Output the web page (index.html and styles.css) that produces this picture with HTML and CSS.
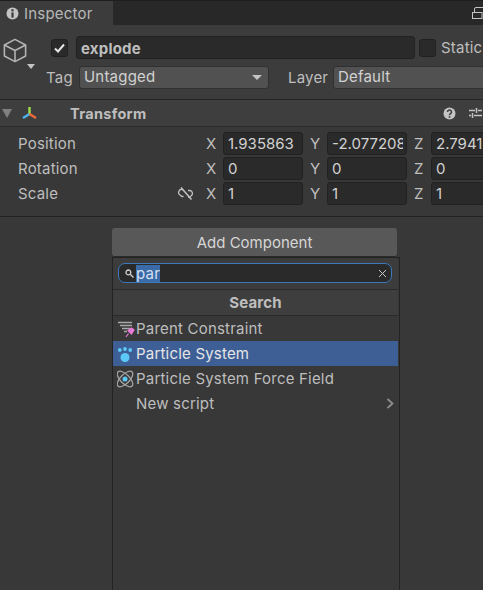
FILE: index.html
```html
<!DOCTYPE html>
<html lang="en">
<head>
    <meta charset="UTF-8">
    <meta name="viewport" content="width=device-width, initial-scale=1.0">
    <title>Inspector</title>
    <link rel="stylesheet" href="styles.css">
</head>
<body>
    <div class="tab-bar">
        <div class="tab">
            <svg class="tab-icon" width="13" height="13" viewBox="0 0 13 13"><circle cx="6.5" cy="6.5" r="6" fill="#c4c4c4"/><rect x="5.4" y="2.2" width="2.2" height="2.2" fill="#3c3c3c"/><rect x="5.4" y="5.4" width="2.2" height="5.2" fill="#3c3c3c"/></svg>
            <span>Inspector</span>
        </div>
        <svg class="lock" width="11" height="12" viewBox="0 0 11 12" fill="none" stroke="#c4c4c4" stroke-width="1"><rect x="0.5" y="5.5" width="9.5" height="6"/><path d="M2.5 5.5V2a1.5 1.5 0 0 1 1.5-1.5H11"/></svg>
    </div>

    <div class="object-header">
        <div class="cube-wrap">
            <svg width="24" height="25" viewBox="0 0 26 27" fill="none" stroke="#b4b4b4" stroke-width="1.7" stroke-linejoin="round"><path d="M13 1.5 24.5 7.5V19.5L13 25.5 1.5 19.5V7.5Z"/><path d="M1.5 7.5 13 13.5 24.5 7.5M13 13.5V25.5"/></svg>
            <span class="cube-arrow"></span>
        </div>
        <div class="header-rows">
            <div class="name-row">
                <span class="checkbox">
                    <svg width="11" height="10" viewBox="0 0 11 10" fill="none" stroke="#e6e6e6" stroke-width="2"><path d="M1 5.5 4 8.5 10 1.5"/></svg>
                </span>
                <div class="name-field">explode</div>
                <span class="checkbox static-box"></span>
                <span class="static-label">Static</span>
            </div>
            <div class="tag-row">
                <span class="tag-label">Tag</span>
                <div class="dropdown tag-drop">Untagged<span class="drop-arrow"></span></div>
                <span class="layer-label">Layer</span>
                <div class="dropdown layer-drop">Default</div>
            </div>
        </div>
    </div>

    <div class="component-head">
        <span class="fold-arrow"></span>
        <svg class="transform-icon" width="17" height="15" viewBox="0 0 17 15" fill="none" stroke-width="2.4">
            <path d="M8.5 8V1" stroke="#9ee04a"/>
            <path d="M8.5 8 2 12" stroke="#4fb4ee"/>
            <path d="M8.5 8 15 12" stroke="#ee6a3c"/>
        </svg>
        <span class="component-title">Transform</span>
        <svg class="help" width="13" height="13" viewBox="0 0 13 13"><circle cx="6.5" cy="6.5" r="6" fill="#c4c4c4"/><path d="M4.5 5a2 2 0 1 1 3 1.7c-.7.4-1 .8-1 1.5" fill="none" stroke="#3e3e3e" stroke-width="1.5"/><rect x="5.7" y="9.2" width="1.6" height="1.6" fill="#3e3e3e"/></svg>
        <svg class="sliders" width="13" height="12" viewBox="0 0 13 12" fill="none" stroke="#c4c4c4" stroke-width="1.5"><path d="M0 3.5H6M9 3.5H13M7.5 1V6M0 8.5H2M5 8.5H13M3.5 6V11"/></svg>
    </div>

    <div class="transform-body">
        <div class="vec-row">
            <span class="vec-label">Position</span>
            <span class="axis">X</span><div class="num-field"><span class="num-value">1.935863</span></div>
            <span class="axis">Y</span><div class="num-field"><span class="num-value">-2.077208</span></div>
            <span class="axis">Z</span><div class="num-field"><span class="num-value">2.794138</span></div>
        </div>
        <div class="vec-row">
            <span class="vec-label">Rotation</span>
            <span class="axis">X</span><div class="num-field"><span class="num-value">0</span></div>
            <span class="axis">Y</span><div class="num-field"><span class="num-value">0</span></div>
            <span class="axis">Z</span><div class="num-field"><span class="num-value">0</span></div>
        </div>
        <div class="vec-row">
            <span class="vec-label">Scale
                <svg class="link-icon" width="16" height="13" viewBox="0 0 16 13" fill="none" stroke="#c4c4c4" stroke-width="1.3"><path d="M5 2.5H4a3 3 0 0 0-2 5.500l2 1.500h1.500M10 3.500H12a3 3 0 0 1 1 5.500l-2 1h-1"/><path d="M3 .5 13.500 12.500" stroke-width="1.5"/></svg>
            </span>
            <span class="axis">X</span><div class="num-field"><span class="num-value">1</span></div>
            <span class="axis">Y</span><div class="num-field"><span class="num-value">1</span></div>
            <span class="axis">Z</span><div class="num-field"><span class="num-value">1</span></div>
        </div>
    </div>

    <div class="add-area">
        <button class="add-button">Add Component</button>
        <div class="popup">
            <div class="search-row">
                <div class="search-box">
                    <svg width="9" height="9" viewBox="0 0 9 9" fill="none" stroke="#d0d0d0" stroke-width="1.3"><circle cx="3.4" cy="3.4" r="2.4"/><path d="M5.2 5.2 8.5 8.5"/></svg>
                    <span class="search-text">par</span>
                    <svg class="search-clear" width="9" height="9" viewBox="0 0 9 9" fill="none" stroke="#c8c8c8" stroke-width="1"><path d="M1 1 8 8M8 1 1 8"/></svg>
                </div>
            </div>
            <div class="popup-title">Search</div>
            <div class="result">
                <svg class="result-icon" width="18" height="18" viewBox="0 0 18 18" fill="none">
                    <path d="M1 2.5H15M3 5.5H15M5 8.5H13M7 11.5H10" stroke="#a8a8a8" stroke-width="1.5"/>
                    <path d="M11 10.500 14.500 14 17 10 14.500 8ZM11.500 13.500 9 17" stroke="#e87ad8" fill="#e87ad8" stroke-width="1.2"/>
                </svg>
                <span>Parent Constraint</span>
            </div>
            <div class="result selected">
                <svg class="result-icon" width="18" height="18" viewBox="0 0 18 18" fill="#5cc8f8">
                    <circle cx="8" cy="12.5" r="4.5"/>
                    <circle cx="2.8" cy="5" r="1.9"/>
                    <circle cx="8" cy="4" r="1.9"/>
                    <circle cx="13.2" cy="5" r="1.9"/>
                </svg>
                <span>Particle System</span>
            </div>
            <div class="result">
                <svg class="result-icon" width="18" height="18" viewBox="0 0 18 18" fill="none" stroke="#a4a4a4" stroke-width="1.3">
                    <ellipse cx="8" cy="9" rx="10" ry="4.5" transform="rotate(45 8 9)"/>
                    <ellipse cx="8" cy="9" rx="10" ry="4.5" transform="rotate(-45 8 9)"/>
                    <circle cx="8" cy="9" r="2.5" fill="#5cc8f8" stroke="none"/>
                </svg>
                <span>Particle System Force Field</span>
            </div>
            <div class="result">
                <span class="result-spacer"></span>
                <span>New script</span>
                <svg class="result-more" width="8" height="11" viewBox="0 0 8 11" fill="none" stroke="#8c8c8c" stroke-width="1.8"><path d="M1.5 1 6.5 5.5 1.5 10"/></svg>
            </div>
        </div>
    </div>
</body>
</html>
```

FILE: styles.css
```css
html, body {
    height: 100%;
}
body {
    margin: 0;
    width: 483px;
    height: 590px;
    overflow: hidden;
    background-color: #383838;
    color: #bebebe;
    font-family: Inter, "Noto Sans", sans-serif;
    font-size: 15px;
    letter-spacing: 0.2px;
    display: flex;
    flex-direction: column;
}

/* Tab strip */
.tab-bar {
    height: 25px;
    flex: none;
    background: #282828;
    display: flex;
    align-items: center;
    justify-content: space-between;
    box-sizing: border-box;
    border-top: 1px solid #1e1e1e;
}
.tab {
    width: 113px;
    height: 24px;
    box-sizing: border-box;
    background: #3c3c3c;
    display: flex;
    align-items: center;
    gap: 5px;
    padding-left: 6px;
    color: #b8b8b8;
}

/* Object name, tag and layer */
.object-header {
    height: 74px;
    flex: none;
    box-sizing: border-box;
    background: #3c3c3c;
    display: flex;
}
.cube-wrap {
    width: 46px;
    flex: none;
    padding: 13px 0 0 3px;
    box-sizing: border-box;
    position: relative;
}
.cube-arrow {
    position: absolute;
    left: 27px;
    top: 39px;
    border-left: 4.5px solid transparent;
    border-right: 4.5px solid transparent;
    border-top: 5px solid #c4c4c4;
}
.header-rows {
    flex: 1;
    min-width: 0;
    padding-top: 11px;
}
.name-row {
    display: flex;
    align-items: center;
    height: 23px;
    padding-left: 5px;
}
.checkbox {
    width: 17px;
    height: 18px;
    flex: none;
    box-sizing: border-box;
    background: #2a2a2a;
    border: 1px solid #212121;
    border-radius: 3px;
    display: flex;
    align-items: center;
    justify-content: center;
}
.name-field {
    width: 339px;
    height: 23px;
    flex: none;
    box-sizing: border-box;
    margin-left: 8px;
    padding-left: 4px;
    background: #2a2a2a;
    border: 1px solid #212121;
    border-radius: 3px;
    line-height: 23px;
    font-weight: 700;
}
.static-box {
    margin-left: 4px;
}
.static-label {
    margin-left: 5px;
    white-space: nowrap;
}
.tag-row {
    display: flex;
    align-items: center;
    height: 23px;
    margin-top: 7px;
}
.tag-label {
    width: 33px;
    flex: none;
}
.dropdown {
    height: 23px;
    box-sizing: border-box;
    flex: none;
    background: #515151;
    border: 1px solid #303030;
    border-radius: 3px;
    padding-left: 4px;
    line-height: 19px;
    color: #d2d2d2;
    position: relative;
}
.tag-drop {
    width: 190px;
}
.drop-arrow {
    position: absolute;
    right: 6px;
    top: 8px;
    border-left: 5px solid transparent;
    border-right: 5px solid transparent;
    border-top: 5px solid #c4c4c4;
}
.layer-label {
    margin-left: 19px;
    width: 45px;
    flex: none;
}
.layer-drop {
    width: 160px;
}

/* Transform component */
.component-head {
    height: 28px;
    flex: none;
    box-sizing: border-box;
    background: #3e3e3e;
    border-top: 1px solid #232323;
    border-bottom: 1px solid #2c2c2c;
    display: flex;
    align-items: center;
}
.fold-arrow {
    margin-left: 2px;
    border-left: 5px solid transparent;
    border-right: 5px solid transparent;
    border-top: 9px solid #808080;
}
.transform-icon {
    margin-left: 9px;
}
.component-title {
    margin-left: 32px;
    font-weight: 700;
    font-size: 14.5px;
    letter-spacing: 0.3px;
}
.help {
    margin-left: auto;
}
.sliders {
    margin-left: 13px;
    margin-right: 1px;
}
.transform-body {
    height: 90px;
    flex: none;
    box-sizing: border-box;
    padding-top: 5px;
    border-bottom: 1px solid #232323;
}
.vec-row {
    display: flex;
    align-items: center;
    height: 23px;
    margin-bottom: 2px;
    width: 560px;
}
.vec-label {
    width: 206px;
    flex: none;
    box-sizing: border-box;
    padding-left: 18px;
    display: flex;
    align-items: center;
}
.link-icon {
    margin-left: auto;
    margin-right: 12px;
}
.axis {
    width: 17px;
    flex: none;
}
.num-field {
    width: 80px;
    height: 23px;
    flex: none;
    box-sizing: border-box;
    margin-right: 7px;
    padding: 0 3px 0 4px;
    background: #2a2a2a;
    border: 1px solid #212121;
    border-radius: 3px;
    color: #d2d2d2;
    letter-spacing: 0;
}
.num-value {
    display: block;
    line-height: 21px;
    overflow: hidden;
    white-space: nowrap;
}

/* Add Component popup */
.add-area {
    flex: 1;
    min-height: 0;
    padding: 11px 0 0 112px;
}
.add-button {
    display: block;
    width: 285px;
    height: 29px;
    padding: 0;
    background: #585858;
    color: #d6d6d6;
    border: none;
    border-bottom: 1px solid #2a2a2a;
    border-radius: 3px;
    font-family: inherit;
    font-size: 15px;
}
.popup {
    width: 288px;
    height: 340px;
    box-sizing: border-box;
    padding-right: 1px;
    background: #383838;
    border: 1px solid #232323;
}
.search-row {
    height: 32px;
    box-sizing: border-box;
    background: #3c3c3c;
    border-bottom: 1px solid #2a2a2a;
    padding: 5px 6px 0 5px;
}
.search-box {
    height: 20px;
    box-sizing: border-box;
    background: #2a2a2a;
    border: 1px solid #3a79bb;
    border-radius: 7px;
    display: flex;
    align-items: center;
    padding-left: 6px;
}
.search-text {
    margin-left: 2px;
    background: #3a6aa8;
    color: #d4e0f0;
    line-height: 17px;
}
.search-clear {
    margin-left: auto;
    margin-right: 4px;
}
.popup-title {
    height: 26px;
    box-sizing: border-box;
    background: #3e3e3e;
    border-bottom: 1px solid #2a2a2a;
    text-align: center;
    line-height: 26px;
    font-weight: 700;
    font-size: 15px;
}
.result {
    height: 25px;
    display: flex;
    align-items: center;
    gap: 1px;
    padding-left: 4px;
}
.result.selected {
    background: #3e5f96;
    color: #e6e6e6;
}
.result-icon {
    flex: none;
}
.result-spacer {
    width: 18px;
    flex: none;
}
.result-more {
    margin-left: auto;
    margin-right: 4px;
}
```
